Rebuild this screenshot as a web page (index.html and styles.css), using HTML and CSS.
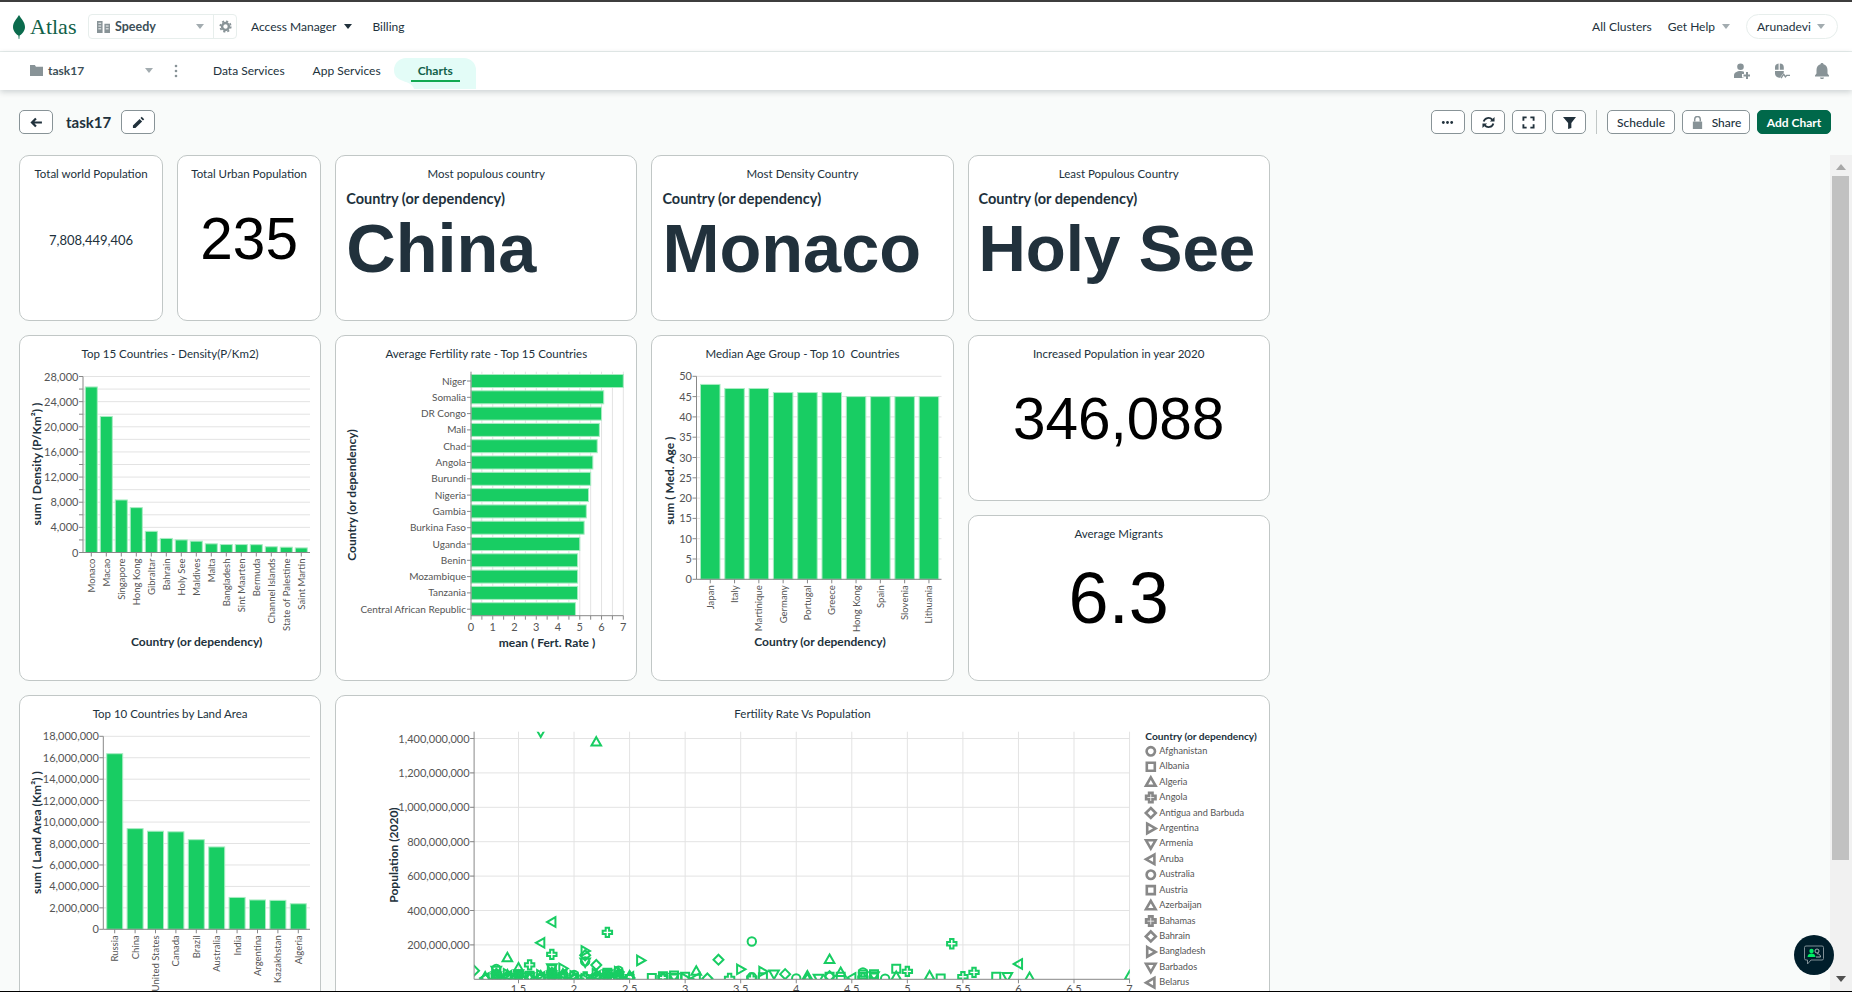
FILE: index.html
```html
<!DOCTYPE html>
<html lang="en">
<head>
    <meta charset="UTF-8">
    <title>task17 | Charts | Atlas</title>
    <link rel="stylesheet" href="styles.css">
</head>
<body>
<div class="app">
    <header class="topbar">
        <a class="logo">
            <svg class="leaf" viewBox="0 0 12 24"><path d="M6 0C8 3.500 12 7 12 12c0 4-3 7-5.400 8.600L6.300 24H5.700L5.400 20.600C3 19 0 16 0 12 0 7 4 3.500 6 0z"/></svg>
            <span class="wordmark">Atlas</span>
        </a>
        <div class="org-select">
            <div class="org-name">
                <svg class="icon grey" viewBox="0 0 14 14"><path d="M0 1h6v13H0zM8 4h6v10H8z"/><path class="cut" d="M1.500 3.500h3M1.500 6.500h3M1.500 9.500h3M9.500 6.500h3M9.500 9.500h3"/></svg>
                <b>Speedy</b>
                <i class="caret grey-caret"></i>
            </div>
            <div class="org-gear">
                <svg class="icon grey" viewBox="0 0 16 16"><circle cx="8" cy="8" r="4.200" fill="none" stroke="currentColor" stroke-width="3"/><circle cx="8" cy="8" r="6.500" fill="none" stroke="currentColor" stroke-width="2" stroke-dasharray="2.600 2.500"/></svg>
            </div>
        </div>
        <a class="top-link access">Access Manager <i class="caret dark-caret"></i></a>
        <a class="top-link">Billing</a>
        <div class="spacer"></div>
        <a class="top-link">All Clusters</a>
        <a class="top-link help">Get Help <i class="caret grey-caret"></i></a>
        <div class="user-pill">Arunadevi <i class="caret grey-caret"></i></div>
    </header>

    <nav class="subbar">
        <div class="project">
            <svg class="icon grey" viewBox="0 0 12 10"><path d="M0 0h4.500l1 1.500H12V10H0z"/></svg>
            <span>task17</span>
            <i class="caret grey-caret"></i>
        </div>
        <svg class="kebab" viewBox="0 0 4 14"><circle cx="2" cy="2" r="1.300"/><circle cx="2" cy="7" r="1.300"/><circle cx="2" cy="12" r="1.300"/></svg>
        <a class="tab">Data Services</a>
        <a class="tab">App Services</a>
        <a class="tab active">
            <svg class="tab-blob" viewBox="0 0 82 31"><path d="M0 12A12 12 0 0 1 12 0H70A12 12 0 0 1 82 12V31H20C18 21 0 26 0 12z"/></svg>
            <span>Charts</span>
        </a>
        <div class="spacer"></div>
        <div class="sub-icons">
            <svg class="icon-lg" viewBox="0 0 16 16"><circle cx="6.500" cy="3.800" r="3.300"/><path d="M0 15v-2.500C0 9.500 3 8 6.500 8c1.500 0 2.600.2 3.500.7V11H8v3.500h1.500v.5z"/><path d="M12 9h2v2.500h2v2h-2V16h-2v-2.500H9.500v-2H12z"/></svg>
            <svg class="icon-lg" viewBox="0 0 16 16"><path d="M1 6.800V4.500A4 4 0 0 1 4.600.5V6.800zM5.800.5A4 4 0 0 1 9.800 4.500V6.800H5.800zM1 8H9.800V9.500L6 14.800A5 5 0 0 1 1 11z"/><path d="M7 15.200l2.700-4 1.700 2.700 1.300-1.500H16" fill="none" stroke="currentColor" stroke-width="1.400"/></svg>
            <svg class="icon-lg" viewBox="0 0 16 16"><path d="M8 0c1 0 1.500.6 1.500 1.300C12 2 13.500 4 13.500 7v3.500L15 12.500V13.500H1V12.500L2.500 10.500V7C2.500 4 4 2 6.500 1.300 6.500.6 7 0 8 0zM6 14.500h4C10 15.500 9 16 8 16s-2-.5-2-1.500z"/></svg>
        </div>
    </nav>

    <div class="toolbar">
        <button class="btn square-btn"><svg class="icon dark" viewBox="0 0 12 12"><path d="M11 6H2M5.500 2.200 1.800 6l3.700 3.800" fill="none" stroke="currentColor" stroke-width="2"/></svg></button>
        <h1 class="dash-name">task17</h1>
        <button class="btn square-btn"><svg class="icon dark" viewBox="0 0 14 14"><path d="M10.500 0.800 13.200 3.500 11.800 4.900 9.100 2.200zM8.200 3.100 10.900 5.800 3.700 13H1V10.300z"/></svg></button>
        <div class="spacer"></div>
        <button class="btn icon-btn"><svg class="icon dark" viewBox="0 0 14 14"><circle cx="2.500" cy="7" r="1.500"/><circle cx="7" cy="7" r="1.500"/><circle cx="11.500" cy="7" r="1.500"/></svg></button>
        <button class="btn icon-btn"><svg class="icon dark" viewBox="0 0 14 14"><path d="M1.800 6A5.300 5.300 0 0 1 11 4M12.200 8A5.300 5.300 0 0 1 3 10" fill="none" stroke="currentColor" stroke-width="2"/><path d="M8.500 5.800h5V1zM5.500 8.200h-5V13z"/></svg></button>
        <button class="btn icon-btn"><svg class="icon dark" viewBox="0 0 14 14"><path d="M1.500 5V1.500H5M9 1.500h3.500V5M12.500 9v3.500H9M5 12.500H1.500V9" fill="none" stroke="currentColor" stroke-width="2"/></svg></button>
        <button class="btn icon-btn"><svg class="icon dark" viewBox="0 0 14 14"><path d="M0 1h14L9 7.500V13L5.500 14V7.500z"/></svg></button>
        <span class="divider"></span>
        <button class="btn text-btn">Schedule</button>
        <button class="btn text-btn"><svg class="icon grey" viewBox="0 0 10 14"><path d="M2 6V3.500a3 3 0 0 1 6 0V6" fill="none" stroke="currentColor" stroke-width="1.600"/><path d="M0 6h10v8H0z"/></svg><span class="share-label">Share</span></button>
        <button class="btn primary-btn">Add Chart</button>
    </div>

    <div class="workspace">
        <main class="grid">
            <section class="card w1">
                <div class="card-title">Total world Population</div>
                <div class="card-number tiny">7,808,449,406</div>
            </section>
            <section class="card w1">
                <div class="card-title">Total Urban Population</div>
                <div class="card-number">235</div>
            </section>
            <section class="card w2">
                <div class="card-title">Most populous country</div>
                <div class="card-text"><div class="field">Country (or dependency)</div><div class="word">China</div></div>
            </section>
            <section class="card w2">
                <div class="card-title">Most Density Country</div>
                <div class="card-text"><div class="field">Country (or dependency)</div><div class="word">Monaco</div></div>
            </section>
            <section class="card w2">
                <div class="card-title">Least Populous Country</div>
                <div class="card-text"><div class="field">Country (or dependency)</div><div class="word tight">Holy See</div></div>
            </section>

            <section class="card w2 h2">
                <div class="card-title">Top 15 Countries - Density(P/Km2)</div>
                <svg class="chart" id="chart-density"></svg>
            </section>
            <section class="card w2 h2">
                <div class="card-title">Average Fertility rate - Top 15 Countries</div>
                <svg class="chart" id="chart-fertility"></svg>
            </section>
            <section class="card w2 h2">
                <div class="card-title">Median Age Group - Top 10&nbsp; Countries</div>
                <svg class="chart" id="chart-age"></svg>
            </section>
            <section class="card w2">
                <div class="card-title">Increased Population in year 2020</div>
                <div class="card-number">346,088</div>
            </section>
            <section class="card w2">
                <div class="card-title">Average Migrants</div>
                <div class="card-number big">6.3</div>
            </section>

            <section class="card w2 h2">
                <div class="card-title">Top 10 Countries by Land Area</div>
                <svg class="chart" id="chart-land"></svg>
            </section>
            <section class="card w6 h2">
                <div class="card-title">Fertility Rate Vs Population</div>
                <svg class="chart" id="chart-scatter"></svg>
            </section>
        </main>

        <aside class="scrollbar">
            <span class="arrow up"></span>
            <span class="thumb"></span>
            <span class="spacer"></span>
            <span class="arrow down"></span>
        </aside>
    </div>

    <button class="chat">
        <svg viewBox="0 0 22 22"><path d="M3 2h16a1.500 1.500 0 0 1 1.500 1.500v11A1.500 1.500 0 0 1 19 16H8l-3.500 4V16H3a1.500 1.500 0 0 1-1.500-1.500v-11A1.500 1.500 0 0 1 3 2z" fill="none" stroke="#7f8f96" stroke-width="1"/><circle cx="8.500" cy="7" r="2.200" fill="#00ed64"/><path d="M4.500 13c0-2.500 2-3.500 4-3.500s4 1 4 3.500z" fill="#00ed64"/><circle cx="14" cy="7" r="2" fill="none" stroke="#b8c4c2" stroke-width=".9"/><path d="M13 13h4.500c0-2-1.500-3.300-3.500-3.300" fill="none" stroke="#b8c4c2" stroke-width=".9"/></svg>
    </button>
</div>
<script src="app.js"></script>
</body>
</html>
```
FILE: styles.css
```css
* {
    box-sizing: border-box;
}

html, body {
    margin: 0;
    height: 100%;
    overflow: hidden;
}

body {
    font-family: Lato, "Noto Sans", sans-serif;
    font-size: 12px;
    color: #21313c;
    background-color: #f9fbfa;
}

.app {
    position: relative;
    display: flex;
    flex-direction: column;
    height: 992px;
    border-top: 2px solid #3d3d3d;
    border-bottom: 1px solid #000;
    overflow: hidden;
}

.spacer {
    flex: 1;
}

/* top bars */
.topbar {
    display: flex;
    align-items: center;
    height: 50px;
    flex-shrink: 0;
    padding: 0 14px 0 13px;
    background-color: #fff;
    border-bottom: 1px solid #e7eeec;
}

.logo {
    display: flex;
    align-items: center;
    width: 75px;
}

.leaf {
    width: 12px;
    height: 24px;
    fill: #0b6b4d;
}

.wordmark {
    margin-left: 5px;
    font-family: "Liberation Serif", serif;
    font-size: 22px;
    color: #116149;
}

.org-select {
    display: flex;
    width: 149px;
    height: 25px;
    border: 1px solid #e7eeec;
    border-radius: 4px;
}

.org-name {
    display: flex;
    align-items: center;
    flex: 1;
    padding: 0 9px 0 8px;
    border-right: 1px solid #e7eeec;
}

.org-name b {
    flex: 1;
    margin-left: 5px;
    font-size: 12.500px;
    font-weight: 700;
    color: #3d4f58;
}

.org-gear {
    display: flex;
    align-items: center;
    justify-content: center;
    width: 22px;
}

.icon {
    width: 13px;
    height: 13px;
    flex-shrink: 0;
    fill: currentColor;
}

.grey {
    color: #889397;
}

.dark {
    color: #21313c;
}

.cut {
    fill: none;
    stroke: #fff;
    stroke-width: 1;
}

.caret {
    display: inline-block;
    width: 0;
    height: 0;
    flex-shrink: 0;
    border-left: 4px solid transparent;
    border-right: 4px solid transparent;
    border-top: 5px solid;
}

.grey-caret {
    border-top-color: #a3acb0;
}

.dark-caret {
    border-top-color: #21313c;
}

.top-link {
    display: flex;
    align-items: center;
    white-space: nowrap;
    color: #21313c;
}

.access {
    gap: 8px;
    margin: 0 20px 0 14px;
}

.help {
    gap: 7px;
    margin: 0 16px 0 16px;
}

.user-pill {
    display: flex;
    align-items: center;
    justify-content: space-between;
    width: 92px;
    height: 25px;
    padding: 0 12px 0 10px;
    border: 1px solid #e7eeec;
    border-radius: 13px;
}

.subbar {
    position: relative;
    z-index: 1;
    display: flex;
    align-items: center;
    height: 38px;
    flex-shrink: 0;
    padding: 0 22px 0 30px;
    background-color: #fff;
    box-shadow: 0 2px 6px rgba(6, 22, 33, 0.18);
}

.project {
    display: flex;
    align-items: center;
    width: 123px;
    margin-bottom: 2px;
    font-weight: 700;
    color: #3d4f58;
}

.project span {
    flex: 1;
    margin-left: 5px;
}

.kebab {
    width: 4px;
    height: 14px;
    margin: 0 35px 0 21px;
    fill: #889397;
}

.tab {
    position: relative;
    margin: 0 28px 2px 0;
    color: #21313c;
}

.tab.active {
    margin-left: 9px;
    color: #116149;
    font-weight: 700;
}

.tab-blob {
    position: absolute;
    left: -24px;
    top: -5px;
    width: 82px;
    height: 31px;
    fill: #e3fcf7;
}

.tab.active span {
    position: relative;
    display: block;
}

.tab.active span::after {
    content: "";
    position: absolute;
    left: -7px;
    right: -7px;
    bottom: -4px;
    height: 2px;
    background-color: #13aa52;
}

.sub-icons {
    display: flex;
    gap: 24px;
}

.icon-lg {
    width: 16px;
    height: 16px;
    fill: #889397;
    color: #889397;
}

/* dashboard toolbar */
.toolbar {
    display: flex;
    align-items: center;
    height: 65px;
    flex-shrink: 0;
    padding: 20px 21px 21px 19px;
}

.btn {
    display: inline-flex;
    align-items: center;
    justify-content: center;
    height: 24px;
    padding: 0;
    font-family: inherit;
    font-size: 12px;
    font-weight: 500;
    color: #21313c;
    background-color: #fff;
    border: 1px solid #889397;
    border-radius: 5px;
}

.square-btn {
    width: 34px;
}

.icon-btn {
    width: 34px;
    margin-left: 6.500px;
}

.text-btn {
    width: 68px;
    margin-left: 7px;
}

.share-label {
    margin-left: 8px;
}

.primary-btn {
    width: 74px;
    margin-left: 7px;
    font-weight: 700;
    color: #fff;
    background-color: #00684a;
    border-color: #00684a;
}

.dash-name {
    margin: 0 10px 0 13px;
    font-size: 15px;
    font-weight: 700;
    color: #21313c;
}

.divider {
    width: 1px;
    height: 24px;
    margin: 0 3px 0 10px;
    background-color: #c1c7c6;
}

/* charts grid */
.workspace {
    display: flex;
    flex: 1;
    min-height: 0;
    justify-content: space-between;
}

.grid {
    display: grid;
    grid-template-columns: repeat(8, 144.100px);
    grid-auto-rows: 166px;
    gap: 14px;
    align-content: start;
    margin-left: 19px;
}

.card {
    display: flex;
    flex-direction: column;
    background-color: #fff;
    border: 1px solid #c1c7c6;
    border-radius: 10px;
    min-width: 0;
}

.w1 {
    grid-column: span 1;
}

.w2 {
    grid-column: span 2;
}

.w6 {
    grid-column: span 6;
}

.h2 {
    grid-row: span 2;
}

.card-title {
    height: 37px;
    flex-shrink: 0;
    padding-top: 10px;
    font-size: 11.500px;
    line-height: 16px;
    text-align: center;
    white-space: nowrap;
    color: #21313c;
}

.card-number {
    display: flex;
    flex: 1;
    align-items: center;
    justify-content: center;
    padding-bottom: 37px;
    font-family: "Liberation Sans", Arial, sans-serif;
    font-size: 58.500px;
    color: #000;
}

.card-number.tiny {
    padding-bottom: 33px;
    font-family: Lato, sans-serif;
    font-size: 13px;
    color: #21313c;
}

.card-number.big {
    font-size: 72px;
}

.card-text {
    margin-top: -4px;
    padding: 0 10px;
    overflow: hidden;
}

.field {
    font-size: 14.500px;
    font-weight: 700;
    line-height: 19px;
}

.word {
    font-family: "Liberation Sans", Arial, sans-serif;
    font-size: 68.500px;
    font-weight: 700;
    line-height: 81px;
    white-space: nowrap;
    color: #21313c;
}

.word.tight {
    font-size: 65.500px;
}

.chart {
    display: block;
    width: 100%;
    flex: 1;
    overflow: visible;
}

.tick-label {
    font-family: Lato, sans-serif;
    font-size: 11px;
    fill: #555;
}

.cat-label {
    font-family: Lato, sans-serif;
    font-size: 10px;
    fill: #555;
}

.rot-label {
    font-family: Lato, sans-serif;
    font-size: 9.500px;
    fill: #555;
}

.axis-title {
    font-family: Lato, sans-serif;
    font-size: 12px;
    font-weight: 700;
    fill: #21313c;
}

.legend-title {
    font-family: Lato, sans-serif;
    font-size: 10.200px;
    font-weight: 700;
    fill: #21313c;
}

.legend-label {
    font-family: Lato, sans-serif;
    font-size: 9.200px;
    fill: #555;
}

.grid-line {
    stroke: #e3e3e3;
    stroke-width: 1;
}

.axis-line {
    stroke: #888;
    stroke-width: 1;
}

.bar {
    fill: #18cd63;
    stroke: #a8ecc2;
    stroke-width: 1;
}

.point {
    fill: none;
    stroke: #18cd63;
    stroke-width: 2;
}

.legend-symbol {
    fill: none;
    stroke: #888;
    stroke-width: 2.600;
}

/* scrollbar and chat */
.scrollbar {
    display: flex;
    flex-direction: column;
    width: 22px;
    padding-left: 2px;
    background-color: #f1f1f1;
}

.arrow {
    display: block;
    width: 0;
    height: 0;
    margin: 9px 0 9px 4px;
    border-left: 5px solid transparent;
    border-right: 5px solid transparent;
}

.arrow.up {
    margin-bottom: 6px;
    border-bottom: 6px solid #a8a8a8;
}

.arrow.down {
    border-top: 6px solid #505050;
}

.thumb {
    display: block;
    width: 17px;
    height: 684px;
    background-color: #c1c1c1;
}

.chat {
    position: absolute;
    right: 18px;
    bottom: 16px;
    display: flex;
    align-items: center;
    justify-content: center;
    width: 40px;
    height: 40px;
    padding: 0;
    background-color: #001e2b;
    border: none;
    border-radius: 50%;
}

.chat svg {
    width: 22px;
    height: 22px;
}
```
FILE: app.js
```js
const SVG_NS = "http://www.w3.org/2000/svg";

function add(parent, tag, attrs, text) {
    const node = document.createElementNS(SVG_NS, tag);
    for (const key in attrs) {
        node.setAttribute(key, attrs[key]);
    }
    if (text !== undefined) {
        node.textContent = text;
    }
    parent.appendChild(node);
    return node;
}

function fmt(n) {
    return n.toLocaleString("en-US");
}

function line(svg, x1, y1, x2, y2, cls) {
    add(svg, "line", { x1, y1, x2, y2, class: cls });
}

function xTitle(svg, text, x, y) {
    add(svg, "text", { x, y, class: "axis-title", "text-anchor": "middle" }, text);
}

function yTitle(svg, text, x, y) {
    add(svg, "text", { transform: `translate(${x},${y}) rotate(-90)`, class: "axis-title", "text-anchor": "middle" }, text);
}

// vertical bars, value axis on the left
function columnChart(id, c) {
    const svg = document.getElementById(id);
    const y = (v) => c.bottom - (v / c.max) * (c.bottom - c.top);

    for (let v = 0; v <= c.max; v += c.gridStep) {
        if (v > 0) line(svg, c.left, y(v), c.right, y(v), "grid-line");
        line(svg, c.left - 4, y(v), c.left, y(v), "axis-line");
    }
    for (let v = 0; v <= c.max; v += c.labelStep) {
        add(svg, "text", { x: c.left - 4.500, y: y(v) + 4, class: "tick-label", "text-anchor": "end" }, fmt(v));
    }

    c.data.forEach((d, i) => {
        const x = c.first + i * c.step;
        const mid = x + c.barW / 2;
        add(svg, "rect", { x, y: y(d[1]), width: c.barW, height: c.bottom - y(d[1]), class: "bar" });
        line(svg, mid, c.bottom, mid, c.bottom + 4, "axis-line");
        add(svg, "text", {
            transform: `translate(${mid + 3.500},${c.bottom + 6}) rotate(-90)`,
            class: "rot-label",
            "text-anchor": "end"
        }, d[0]);
    });

    line(svg, c.left, c.top, c.left, c.bottom, "axis-line");
    line(svg, c.left, c.bottom, c.right, c.bottom, "axis-line");
    if (c.xTitle) xTitle(svg, c.xTitle[0], c.xTitle[1], c.xTitle[2]);
    yTitle(svg, c.yTitle[0], c.yTitle[1], c.yTitle[2]);
}

// horizontal bars for the fertility chart
function barChart(id, c) {
    const svg = document.getElementById(id);
    const x = (v) => c.left + (v / c.max) * (c.right - c.left);

    for (let v = 0.5; v <= c.max; v += 0.5) {
        line(svg, x(v), c.top, x(v), c.bottom, "grid-line");
    }
    for (let v = 0; v <= c.max; v += 0.5) {
        line(svg, x(v), c.bottom, x(v), c.bottom + 4, "axis-line");
        if (Number.isInteger(v)) {
            add(svg, "text", { x: x(v), y: c.bottom + 15, class: "tick-label", "text-anchor": "middle" }, v);
        }
    }
    c.data.forEach((d, i) => {
        const mid = c.first + i * c.step;
        add(svg, "rect", { x: c.left, y: mid - c.barH / 2, width: x(d[1]) - c.left, height: c.barH, class: "bar" });
        line(svg, c.left - 4, mid, c.left, mid, "axis-line");
        add(svg, "text", { x: c.left - 5, y: mid + 3.500, class: "cat-label", "text-anchor": "end" }, d[0]);
    });
    line(svg, c.left, c.top, c.left, c.bottom, "axis-line");
    line(svg, c.left, c.bottom, c.right, c.bottom, "axis-line");
    xTitle(svg, c.xTitle[0], c.xTitle[1], c.xTitle[2]);
    yTitle(svg, c.yTitle[0], c.yTitle[1], c.yTitle[2]);
}

const SHAPES = [
    null,
    "M-4-4H4V4H-4Z",
    "M0-4.800 4.800 3.600H-4.800Z",
    "M-1.700-4.700H1.700V-1.700H4.700V1.700H1.700V4.700H-1.700V1.700H-4.700V-1.700H-1.700Z",
    "M0-5 5 0 0 5-5 0Z",
    "M-3.600-4.800 4.800 0-3.600 4.800Z",
    "M0 4.800 4.800-3.600H-4.800Z",
    "M3.600-4.800-4.800 0 3.600 4.800Z"
];

function symbol(parent, shape, x, y, cls) {
    const transform = `translate(${x},${y})`;
    if (shape === 0) {
        add(parent, "circle", { r: 4.200, transform, class: cls });
    } else {
        add(parent, "path", { d: SHAPES[shape], transform, class: cls });
    }
}

function scatterChart(id, c) {
    const svg = document.getElementById(id);
    const x = (v) => c.x0 + (v - 1.5) * c.perUnit;
    const y = (m) => c.bottom - m * c.perMillion;

    for (let v = 1.5; v <= 7; v += 0.5) {
        line(svg, x(v), c.top, x(v), c.bottom, "grid-line");
        line(svg, x(v), c.bottom, x(v), c.bottom + 4, "axis-line");
        add(svg, "text", { x: x(v), y: c.bottom + 14, class: "tick-label", "text-anchor": "middle" }, v);
    }
    for (let m = 200; m <= 1400; m += 200) {
        line(svg, c.left - 4, y(m), c.right, y(m), "grid-line");
        line(svg, c.left - 4, y(m), c.left, y(m), "axis-line");
        add(svg, "text", { x: c.left - 4.500, y: y(m) + 4, class: "tick-label", "text-anchor": "end" }, fmt(m * 1000000));
    }

    const defs = add(svg, "defs", {});
    const clip = add(defs, "clipPath", { id: "plot-clip" });
    add(clip, "rect", { x: c.left, y: c.top, width: c.right - c.left, height: c.bottom - c.top });
    const plot = add(svg, "g", { "clip-path": "url(#plot-clip)" });
    c.points.forEach((p) => symbol(plot, p[2], x(p[0]), y(p[1]), "point"));
    c.cluster.forEach((group) => {
        for (let i = 0; i < group[1]; i++) {
            symbol(plot, (group[0] * 10 + i * 3) % 8 | 0, x(group[0]), y(2 + i * 6), "point");
        }
    });

    line(svg, c.left, c.top, c.left, c.bottom, "axis-line");
    line(svg, c.left, c.bottom, c.right, c.bottom, "axis-line");
    yTitle(svg, c.yTitle[0], c.yTitle[1], c.yTitle[2]);

    add(svg, "text", { x: c.legendX, y: 6.500, class: "legend-title" }, "Country (or dependency)");
    c.legend.forEach((name, i) => {
        const rowY = 17.300 + i * 15.430;
        symbol(svg, i % 8, c.legendX + 5.500, rowY + 1, "legend-symbol");
        add(svg, "text", { x: c.legendX + 14, y: rowY + 3.500, class: "legend-label" }, name);
    });
}

columnChart("chart-density", {
    left: 63, right: 290, top: 3.500, bottom: 179.500,
    max: 28000, gridStep: 2000, labelStep: 4000,
    first: 65.300, step: 15, barW: 12,
    xTitle: ["Country (or dependency)", 176.700, 273],
    yTitle: ["sum ( Density (P/Km²) )", 21, 91],
    data: [
        ["Monaco", 26337], ["Macao", 21645], ["Singapore", 8358], ["Hong Kong", 7140], ["Gibraltar", 3369],
        ["Bahrain", 2239], ["Holy See", 2003], ["Maldives", 1802], ["Malta", 1380], ["Bangladesh", 1265],
        ["Sint Maarten", 1261], ["Bermuda", 1246], ["Channel Islands", 915], ["State of Palestine", 847], ["Saint Martin", 730]
    ]
});

barChart("chart-fertility", {
    left: 135, right: 287.300, top: -1.300, bottom: 242.700, max: 7,
    first: 8, step: 16.300, barH: 13,
    xTitle: ["mean ( Fert. Rate )", 211, 273.700],
    yTitle: ["Country (or dependency)", 20, 122],
    data: [
        ["Niger", 7], ["Somalia", 6.100], ["DR Congo", 6], ["Mali", 5.900], ["Chad", 5.800],
        ["Angola", 5.600], ["Burundi", 5.500], ["Nigeria", 5.400], ["Gambia", 5.300], ["Burkina Faso", 5.200],
        ["Uganda", 5], ["Benin", 4.900], ["Mozambique", 4.900], ["Tanzania", 4.900], ["Central African Republic", 4.800]
    ]
});

columnChart("chart-age", {
    left: 44.500, right: 289.500, top: 3.300, bottom: 206.300,
    max: 50, gridStep: 5, labelStep: 5,
    first: 48.500, step: 24.300, barW: 19.500,
    xTitle: ["Country (or dependency)", 168, 273],
    yTitle: ["sum ( Med. Age )", 21.500, 107.700],
    data: [
        ["Japan", 48], ["Italy", 47], ["Martinique", 47], ["Germany", 46], ["Portugal", 46],
        ["Greece", 46], ["Hong Kong", 45], ["Spain", 45], ["Slovenia", 45], ["Lithuania", 45]
    ]
});

columnChart("chart-land", {
    left: 83.300, right: 290, top: 3.300, bottom: 196.300,
    max: 18000000, gridStep: 2000000, labelStep: 2000000,
    first: 86.700, step: 20.400, barW: 16,
    yTitle: ["sum ( Land Area (Km²) )", 21, 99.700],
    data: [
        ["Russia", 16376870], ["China", 9388211], ["United States", 9147420], ["Canada", 9093510], ["Brazil", 8358140],
        ["Australia", 7682300], ["India", 2973190], ["Argentina", 2736690], ["Kazakhstan", 2699700], ["Algeria", 2381740]
    ]
});

scatterChart("chart-scatter", {
    left: 138.100, right: 793.800, top: -1.300, bottom: 246.300,
    x0: 182.500, perUnit: 111.100, perMillion: 0.172,
    yTitle: ["Population (2020)", 61.600, 122],
    legendX: 809.300,
    points: [
        [1.7, 1437, 6], [2.2, 1380, 2], [1.8, 333, 7], [2.3, 273, 3], [3.6, 220, 0], [1.7, 212, 7], [1.8, 145, 3],
        [2.1, 165, 5], [2.1, 140, 4], [2.1, 104, 0], [2.1, 100, 6], [2.6, 110, 5], [3.3, 114, 4], [1.4, 126, 2],
        [1.6, 84, 3], [2.2, 83, 4], [1.5, 67, 2], [1.1, 50, 4], [1.3, 60, 0], [1.3, 52, 6], [3.5, 58, 5],
        [3.1, 48, 2], [3.4, 5, 3], [3.7, 45, 5], [3.8, 30, 6], [3.9, 30, 4], [1.8, 66, 6], [1.8, 58, 1],
        [1.9, 63, 5], [5.4, 207, 3], [4.3, 116, 2], [6, 89, 7], [4.9, 61, 1], [5, 46, 3], [5.6, 40, 3], [4.4, 40, 2],
        [5.2, 20, 2], [5.3, 5, 1], [5.5, 15, 3], [5.8, 15, 1], [5.9, 15, 6], [6.1, 12, 2], [7, 20, 2], [4, 5, 0],
        [4.2, 5, 6], [4.3, 15, 1], [4.3, 18, 4], [4.1, 20, 2], [4.1, 12, 2], [4.1, 5, 2], [4.4, 15, 1], [4.5, 8, 7],
        [4.6, 40, 0], [4.6, 28, 1], [4.6, 15, 1], [4.6, 6, 3], [4.7, 30, 1], [4.7, 20, 6], [4.7, 10, 1], [4.8, 3, 0],
        [4.9, 18, 2], [3.2, 5, 4], [3.7, 12, 1], [3.6, 12, 0], [3.6, 6, 3], [3.1, 8, 7], [3, 15, 1], [3, 6, 5],
        [2.7, 8, 1], [2.8, 18, 1], [2.8, 10, 3], [2.8, 4, 1], [2.9, 22, 1], [2.9, 12, 6], [2.9, 4, 1]
    ],
    cluster: [
        [1.2, 3], [1.3, 6], [1.4, 6], [1.5, 6], [1.6, 4], [1.7, 5], [1.8, 7], [1.9, 6],
        [2, 5], [2.1, 3], [2.2, 6], [2.3, 7], [2.4, 9], [2.5, 4]
    ],
    legend: [
        "Afghanistan", "Albania", "Algeria", "Angola", "Antigua and Barbuda", "Argentina", "Armenia", "Aruba",
        "Australia", "Austria", "Azerbaijan", "Bahamas", "Bahrain", "Bangladesh", "Barbados", "Belarus"
    ]
});
```
